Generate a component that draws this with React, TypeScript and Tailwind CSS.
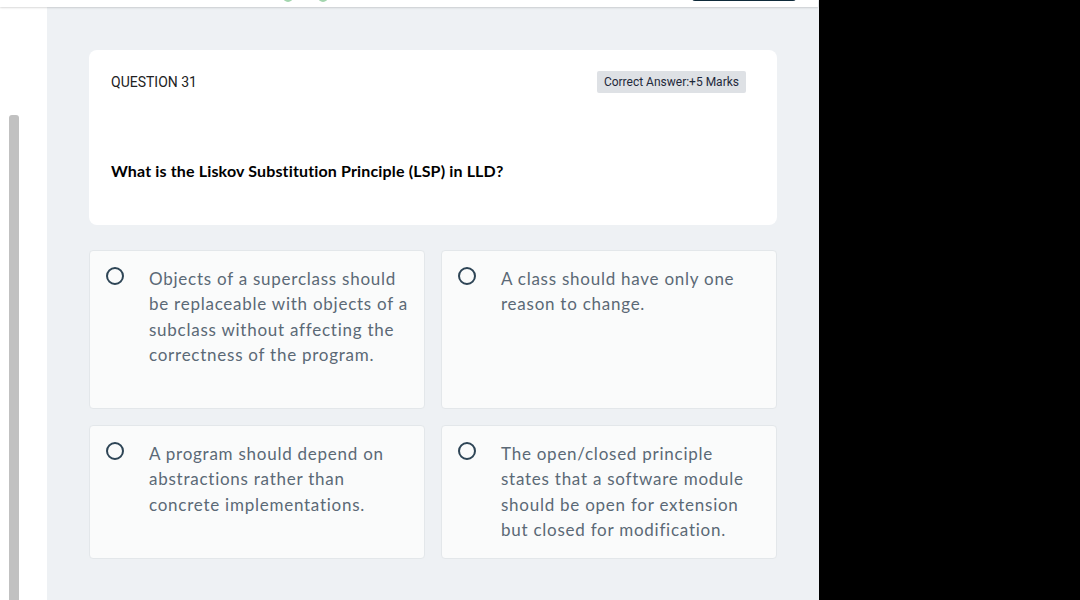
import React from "react";

const options = [
  "Objects of a superclass should be replaceable with objects of a subclass without affecting the correctness of the program.",
  "A class should have only one reason to change.",
  "A program should depend on abstractions rather than concrete implementations.",
  "The open/closed principle states that a software module should be open for extension but closed for modification.",
];

function Option({ text }: { text: string }) {
  return (
    <div className="flex items-start rounded-[4px] border border-[#e3e7ea] bg-[#fafbfb] pl-[16px] pr-[12px] pt-[15px] pb-[16px]">
      <div className="mt-[1px] h-[18px] w-[18px] shrink-0 rounded-full border-[2px] border-[#2e4556]" />
      <div
        className="ml-[25px] text-[17px] leading-[25.3px] tracking-[0.75px] text-[#5b6976]"
        style={{ fontFamily: "Lato, 'Open Sans', sans-serif" }}
      >
        {text}
      </div>
    </div>
  );
}

export default function App() {
  return (
    <div className="flex h-[600px] w-[1080px] overflow-hidden bg-black">
      <div className="relative flex h-full w-[819px] flex-col bg-[#eef1f4]">
        <div className="relative z-10 flex h-[7px] w-[818px] shrink-0 items-start overflow-hidden bg-white shadow-[0_1px_2px_rgba(0,0,0,0.15)]">
          <div className="ml-[283px] -mt-[8px] h-[10px] w-[10px] rounded-full bg-[#a3d5ae]" />
          <div className="ml-[25px] -mt-[8px] h-[10px] w-[10px] rounded-full bg-[#a3d5ae]" />
          <div className="ml-[364px] -mt-[6px] h-[7px] w-[104px] rounded-[3px] bg-[#0f2a3a]" />
        </div>
        <div className="flex flex-1">
          <div className="flex w-[47px] shrink-0 flex-col bg-white pl-[9px] pt-[108px]">
            <div className="w-[10px] flex-1 rounded-t-[3px] bg-[#c1c1c1]" />
          </div>
          <div className="flex-1 px-[42px] pt-[43px]">
            <div className="rounded-[8px] bg-white pl-[22px] pr-[31px] pt-[21px] pb-[43px]">
              <div className="flex items-center justify-between">
                <div
                  className="text-[14px] text-[#222]"
                  style={{ fontFamily: "Roboto, sans-serif" }}
                >
                  QUESTION 31
                </div>
                <div
                  className="flex h-[22px] items-center rounded-[2px] bg-[#dee1e5] px-[7px] text-[12px] text-[#1e293b]"
                  style={{ fontFamily: "Roboto, sans-serif" }}
                >
                  Correct Answer:+5 Marks
                </div>
              </div>
              <div
                className="mt-[67px] text-[16px] font-bold leading-[22px] tracking-[0.15px] text-black"
                style={{ fontFamily: "Lato, 'Open Sans', sans-serif" }}
              >
                What is the Liskov Substitution Principle (LSP) in LLD?
              </div>
            </div>
            <div className="mt-[25px] grid grid-cols-2 gap-[16px]">
              <div className="grid min-h-[159px]">
                <Option text={options[0]} />
              </div>
              <div className="grid min-h-[159px]">
                <Option text={options[1]} />
              </div>
              <Option text={options[2]} />
              <Option text={options[3]} />
            </div>
          </div>
        </div>
      </div>
    </div>
  );
}
